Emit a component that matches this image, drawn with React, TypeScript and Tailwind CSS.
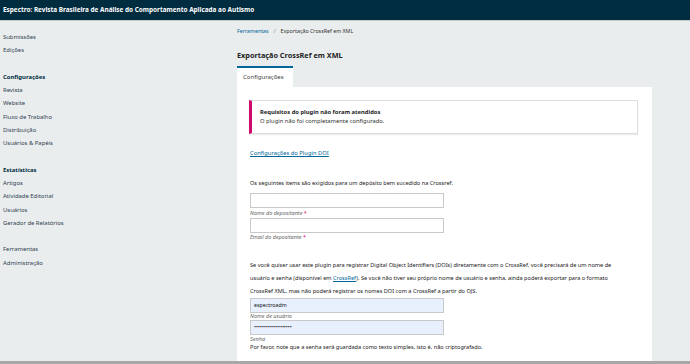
import React from "react";

const navGroups: { title?: string; items: string[] }[] = [
  { items: ["Submissões", "Edições"] },
  {
    title: "Configurações",
    items: ["Revista", "Website", "Fluxo de Trabalho", "Distribuição", "Usuários & Papéis"],
  },
  {
    title: "Estatísticas",
    items: ["Artigos", "Atividade Editorial", "Usuários", "Gerador de Relatórios"],
  },
  { items: ["Ferramentas", "Administração"] },
];

function Sidebar() {
  return (
    <aside className="w-[237px] shrink-0 pl-[3px] pt-[10px] text-[5.9px] leading-[13.33px]">
      {navGroups.map((g, i) => (
        <div key={i} className={i > 0 ? "mt-[13px]" : ""}>
          {g.title && <div className="font-bold text-[#002c40]">{g.title}</div>}
          {g.items.map((item) => (
            <div key={item} className="text-[#2c3e50]">
              {item}
            </div>
          ))}
        </div>
      ))}
    </aside>
  );
}

function Field({
  value,
  label,
  required,
  filled,
  gap,
}: {
  value?: string;
  label: string;
  required?: boolean;
  filled?: boolean;
  gap: string;
}) {
  return (
    <div>
      <div
        className={`w-[194px] h-[15px] border border-[#c9c9c9] flex items-center px-[3px] text-[5.3px] text-[#111] ${
          filled ? "bg-[#e8f0fe]" : "bg-white"
        }`}
      >
        {value}
      </div>
      <div className={`italic text-[5.5px] text-[#666] ${gap}`}>
        {label}
        {required && <span className="not-italic text-[#d00a6c]"> *</span>}
      </div>
    </div>
  );
}

export default function App() {
  return (
    <div
      className="w-[690px] h-[364px] overflow-hidden bg-[#eaedee] flex flex-col"
      style={{ fontFamily: "'Noto Sans', 'Open Sans', sans-serif" }}
    >
      <header className="h-[21px] shrink-0 bg-[#002c40] border-b border-[#c4ccd0] flex items-center px-[3px]">
        <span className="text-white font-bold text-[6.4px]">
          Espectro: Revista Brasileira de Análise do Comportamento Aplicada ao Autismo
        </span>
      </header>

      <div className="flex flex-1 min-h-0">
        <Sidebar />

        <main className="flex-1 pr-[38px] flex flex-col">
          <div className="pt-[6px] text-[5.3px] leading-[8px] text-[#333]">
            <span className="text-[#006798]">Ferramentas</span>
            <span className="mx-[5px] text-[#888]">/</span>
            <span>Exportação CrossRef em XML</span>
          </div>

          <h1 className="mt-[16px] text-[7.3px] font-bold leading-[8px] text-[#222]">
            Exportação CrossRef em XML
          </h1>

          <div className="mt-[7px] flex">
            <div className="w-[56px] h-[21px] bg-white border-t-2 border-[#006798] flex items-center pl-[6px] text-[6px] text-[#444]">
              Configurações
            </div>
          </div>

          <section className="flex-1 bg-white px-[12px] pt-[13px]">
            <div className="mr-[2px] h-[34px] border border-[#dddddd] border-l-[3px] border-l-[#d00a6c] pl-[8px] flex flex-col justify-center shadow-[0_1px_1px_rgba(0,0,0,0.08)]">
              <div className="font-bold text-[5.8px] leading-[9px] text-[#222]">
                Requisitos do plugin não foram atendidos
              </div>
              <div className="text-[5.8px] leading-[9px] text-[#333]">O plugin não foi completamente configurado.</div>
            </div>

            <div className="mt-[15px] pl-[1px] text-[5.8px] leading-[9px]">
              <a className="text-[#006798] underline">Configurações do Plugin DOI</a>
            </div>

            <p className="mt-[21px] pl-[1px] text-[5.6px] leading-[9px] text-[#222]">
              Os seguintes items são exigidos para um depósito bem sucedido na Crossref.
            </p>

            <div className="mt-[5px] pl-[1px] flex flex-col">
              <Field label="Nome do depositante" required gap="leading-[10px]" />
              <Field label="Email do depositante" required gap="leading-[9px]" />
            </div>

            <p className="mt-[17px] pl-[1px] text-[5.6px] leading-[13px] text-[#222] whitespace-nowrap">
              Se você quiser usar este plugin para registrar Digital Object Identifiers (DOIs) diretamente com o
              CrossRef, você precisará de um nome de
              <br />
              usuário e senha (disponível em <a className="text-[#006798] underline">CrossRef</a>). Se você não tiver
              seu próprio nome de usuário e senha, ainda poderá exportar para o formato
              <br />
              CrossRef XML, mas não poderá registrar os nomes DOI com a CrossRef a partir do OJS.
            </p>

            <div className="pl-[1px] flex flex-col">
              <Field label="Nome de usuário" value="espectroadm" filled gap="leading-[7px]" />
              <Field label="Senha" value="•••••••••••••••••••" filled gap="leading-[8px]" />
            </div>
            <p className="pl-[1px] text-[5.6px] leading-[8px] text-[#222]">
              Por favor, note que a senha será guardada como texto simples, isto é, não criptografado.
            </p>
          </section>
        </main>
      </div>
      <div className="h-[3px] shrink-0 bg-[#a8a8a8]" />
    </div>
  );
}
